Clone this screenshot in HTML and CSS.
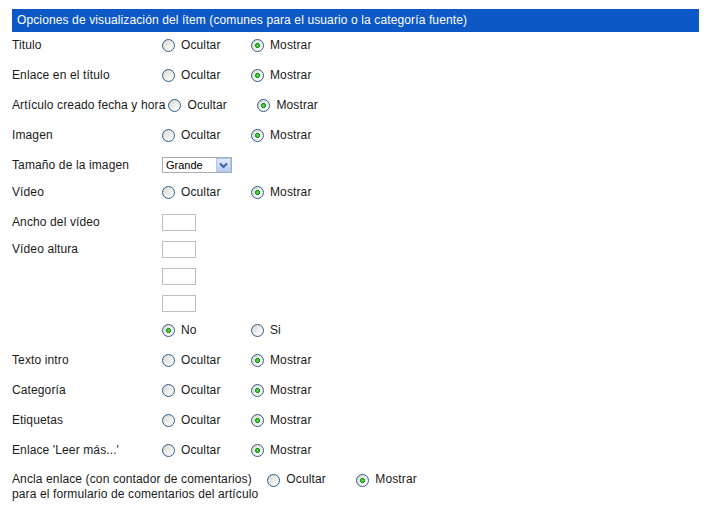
FILE: index.html
```html
<!DOCTYPE html>
<html lang="es">
<head>
  <meta charset="UTF-8" />
  <title>Opciones de visualización del ítem</title>
  <link rel="stylesheet" href="styles.css">
</head>
<body>
  <div class="panel">
    <div class="panel-head">Opciones de visualización del ítem (comunes para el usuario o la categoría fuente)</div>

    <div class="row first">
      <label class="key">Titulo</label>
      <label class="opt"><input type="radio" name="title" value="0"> Ocultar</label>
      <label class="opt"><input type="radio" name="title" value="1" checked> Mostrar</label>
    </div>
    <div class="row">
      <label class="key">Enlace en el título</label>
      <label class="opt"><input type="radio" name="titleLink" value="0"> Ocultar</label>
      <label class="opt"><input type="radio" name="titleLink" value="1" checked> Mostrar</label>
    </div>
    <div class="row">
      <label class="key">Artículo creado fecha y hora</label>
      <label class="opt"><input type="radio" name="dateCreated" value="0"> Ocultar</label>
      <label class="opt"><input type="radio" name="dateCreated" value="1" checked> Mostrar</label>
    </div>
    <div class="row">
      <label class="key">Imagen</label>
      <label class="opt"><input type="radio" name="image" value="0"> Ocultar</label>
      <label class="opt"><input type="radio" name="image" value="1" checked> Mostrar</label>
    </div>
    <div class="row">
      <label class="key">Tamaño de la imagen</label>
      <span class="select">
        <select name="imageSize">
          <option>Grande</option>
          <option>Mediano</option>
          <option>Pequeño</option>
        </select>
        <span class="select-btn">
          <svg width="9" height="7" viewBox="0 0 9 7"><path d="M1 1.5 L4.5 5 L8 1.5" fill="none" stroke="#3a5fa3" stroke-width="2"/></svg>
        </span>
      </span>
    </div>
    <div class="row tight">
      <label class="key">Vídeo</label>
      <label class="opt"><input type="radio" name="video" value="0"> Ocultar</label>
      <label class="opt"><input type="radio" name="video" value="1" checked> Mostrar</label>
    </div>
    <div class="row">
      <label class="key">Ancho del vídeo</label>
      <input class="box" type="text" name="videoWidth">
    </div>
    <div class="row tight">
      <label class="key">Vídeo altura</label>
      <input class="box" type="text" name="videoHeight">
    </div>
    <div class="row tight">
      <span class="key"></span>
      <input class="box" type="text" name="videoExtra1">
    </div>
    <div class="row tight">
      <span class="key"></span>
      <input class="box" type="text" name="videoExtra2">
    </div>
    <div class="row tight">
      <span class="key"></span>
      <label class="opt"><input type="radio" name="videoAuto" value="0" checked> No</label>
      <label class="opt"><input type="radio" name="videoAuto" value="1"> Si</label>
    </div>
    <div class="row">
      <label class="key">Texto intro</label>
      <label class="opt"><input type="radio" name="intro" value="0"> Ocultar</label>
      <label class="opt"><input type="radio" name="intro" value="1" checked> Mostrar</label>
    </div>
    <div class="row">
      <label class="key">Categoría</label>
      <label class="opt"><input type="radio" name="category" value="0"> Ocultar</label>
      <label class="opt"><input type="radio" name="category" value="1" checked> Mostrar</label>
    </div>
    <div class="row">
      <label class="key">Etiquetas</label>
      <label class="opt"><input type="radio" name="tags" value="0"> Ocultar</label>
      <label class="opt"><input type="radio" name="tags" value="1" checked> Mostrar</label>
    </div>
    <div class="row">
      <label class="key">Enlace 'Leer más...'</label>
      <label class="opt"><input type="radio" name="readMore" value="0"> Ocultar</label>
      <label class="opt"><input type="radio" name="readMore" value="1" checked> Mostrar</label>
    </div>
    <div class="row multi">
      <label class="key">Ancla enlace (con contador de comentarios)<br>para el formulario de comentarios del artículo</label>
      <label class="opt"><input type="radio" name="commentsAnchor" value="0"> Ocultar</label>
      <label class="opt"><input type="radio" name="commentsAnchor" value="1" checked> Mostrar</label>
    </div>
  </div>
</body>
</html>
```

FILE: styles.css
```css
*{box-sizing:border-box}
body{
  margin:0;
  background:#fff;
  color:#1a1a1a;
  font-family:'Liberation Sans',Arial,sans-serif;
  font-size:12px;
  letter-spacing:.12px;
}
.panel{padding:9px 14px 0 12px}

/* ── Header bar ───────────────────────── */
.panel-head{
  background:#0c58c6;
  color:#fff;
  height:23px;
  line-height:23px;
  padding-left:5px;
  white-space:nowrap;
}

/* ── Rows ─────────────────────────────── */
.row{
  display:flex;
  align-items:center;
  height:20px;
  margin-top:10px;
}
.row.first{margin-top:3px}
.row.tight{margin-top:7px}
.row.multi{align-items:flex-start;height:auto;padding-top:2px;line-height:15px}

.key{
  min-width:150px;
  padding-right:3px;
  flex-shrink:0;
}
.multi .key{padding-right:9px}
.opt{
  width:89px;
  display:flex;
  align-items:center;
  white-space:nowrap;
}

/* XP-style radio */
.opt input{
  appearance:none;
  -webkit-appearance:none;
  width:13px;height:13px;
  margin:0 6px 0 0;
  border:1px solid #2f5b8a;
  border-radius:50%;
  background:linear-gradient(135deg,#d6d6d0 0%,#f0f0ec 55%,#fff 100%);
  flex-shrink:0;
}
.opt input:checked{
  background:
    radial-gradient(circle at 50% 50%,#7ee07e 0,#2fb12f 1.5px,#1f961f 2.3px,transparent 2.8px),
    linear-gradient(135deg,#d6d6d0 0%,#f0f0ec 55%,#fff 100%);
}
.multi .opt input{margin-top:1px}

/* Text boxes */
.box{
  width:34px;height:17px;
  border:1px solid #bdbdbd;
  padding:0;
  margin:0;
  font:inherit;
}

/* Select */
.select{
  position:relative;
  display:inline-block;
  width:70px;height:16px;
}
.select select{
  appearance:none;
  -webkit-appearance:none;
  width:100%;height:100%;
  border:1px solid #a5acb5;
  background:#fff;
  font-family:'Liberation Sans',Arial,sans-serif;
  font-size:11px;
  color:#000;
  padding:0 0 0 3px;
  margin:0;
  border-radius:0;
}
.select-btn{
  position:absolute;
  top:1px;right:1px;
  width:15px;height:14px;
  background:linear-gradient(#dfe9fb,#b8cdf5);
  border:1px solid #b3c6ec;
  display:flex;
  align-items:center;
  justify-content:center;
  pointer-events:none;
}
```
